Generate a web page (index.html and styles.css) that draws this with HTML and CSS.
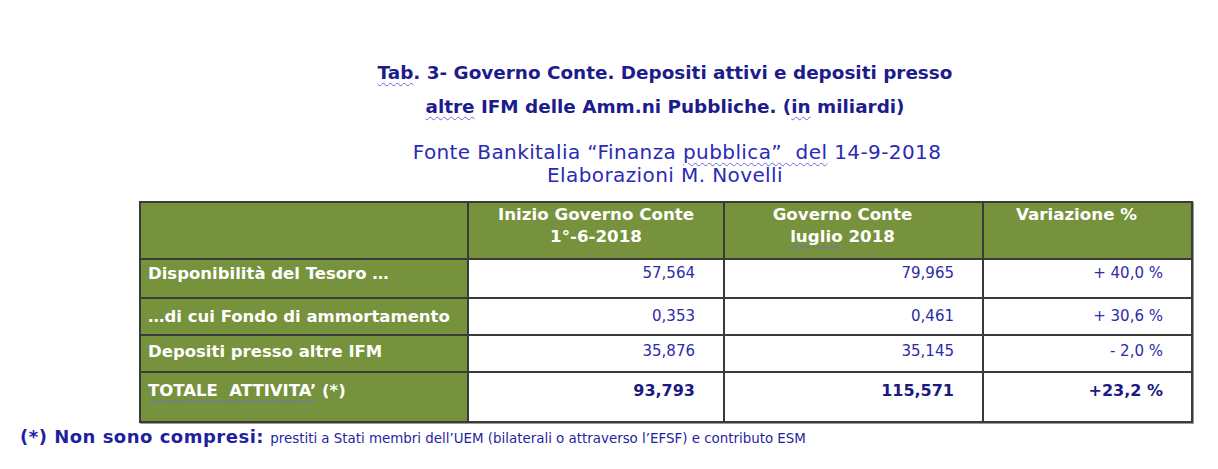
FILE: index.html
```html
<!DOCTYPE html>
<html lang="it">
<head>
<meta charset="utf-8">
<title>Tab. 3</title>
<link rel="stylesheet" href="styles.css">
</head>
<body>
<div class="page">
  <div class="block">
    <h1 class="title"><span class="sp">Tab</span>. 3- Governo Conte. Depositi attivi e depositi presso<br><span class="sp">altre</span> IFM delle Amm.ni Pubbliche. (<span class="sp">in</span> miliardi)</h1>
    <div class="source">
      <p class="src-line first">Fonte Bankitalia “Finanza <span class="sp">pubblica”  del</span> 14-9-2018</p>
      <p class="src-line">Elaborazioni M. Novelli</p>
    </div>
    <table class="tab">
      <colgroup>
        <col class="c1"><col class="c2"><col class="c3"><col class="c4">
      </colgroup>
      <tr class="head">
        <th></th>
        <th>Inizio Governo Conte<br>1°-6-2018</th>
        <th class="shift">Governo Conte<br><span class="sp">luglio</span> 2018</th>
        <th class="shift">Variazione %</th>
      </tr>
      <tr class="r1">
        <th>Disponibilità del Tesoro …</th>
        <td>57,564</td><td>79,965</td><td>+ 40,0 %</td>
      </tr>
      <tr class="r2">
        <th>…di cui Fondo di ammortamento</th>
        <td>0,353</td><td>0,461</td><td>+ 30,6 %</td>
      </tr>
      <tr class="r3">
        <th>Depositi presso altre IFM</th>
        <td>35,876</td><td>35,145</td><td>- 2,0 %</td>
      </tr>
      <tr class="r4 total">
        <th><span class="sp">TOTALE  ATTIVITA’</span> (*)</th>
        <td>93,793</td><td>115,571</td><td>+23,2 %</td>
      </tr>
    </table>
  </div>
  <p class="note"><b>(*) Non sono compresi:</b> <span class="small">prestiti a Stati membri dell’UEM (bilaterali o attraverso l’EFSF) e contributo ESM</span></p>
</div>
</body>
</html>
```
FILE: styles.css
```css
html, body {
  margin: 0;
  padding: 0;
  background: #ffffff;
}
body {
  font-family: "DejaVu Sans", "Liberation Sans", sans-serif;
  width: 1218px;
  height: 469px;
  overflow: hidden;
}
.page {
  padding-top: 56px;
}
.block {
  width: 1052px;
  margin-left: 139px;
  text-align: center;
}
.title {
  margin: 0;
  font-size: 18.4px;
  line-height: 34px;
  font-weight: bold;
  color: #1c1c8c;
}
.sp {
  text-decoration: underline wavy #6a6adc;
  text-decoration-thickness: 1px;
  text-underline-offset: 3px;
  white-space: pre;
}
.source {
  margin-top: 17px;
  font-size: 20px;
  line-height: 23px;
  letter-spacing: 0.4px;
  color: #2a2ab4;
}
.src-line {
  margin: 0;
}
.src-line.first {
  padding-left: 24px;
}
.tab {
  margin-top: 14px;
  width: 1052px;
  border-collapse: collapse;
  table-layout: fixed;
  box-shadow: 1px 1px 0 #9a9a9a;
}
.c1 { width: 328px; }
.c2 { width: 256px; }
.c3 { width: 259px; }
.c4 { width: 209px; }
.tab th, .tab td {
  border: 2px solid #3a3a3a;
  padding: 0;
  vertical-align: top;
}
.tab th {
  background: #76923c;
  color: #ffffff;
  font-size: 16.5px;
  font-weight: bold;
  text-align: left;
  padding-left: 7px;
}
.head th {
  height: 55px;
  text-align: center;
  padding: 0;
  line-height: 22px;
  font-size: 16.7px;
}
.head th.shift {
  padding-right: 22px;
}
.tab td {
  text-align: right;
  padding-right: 28px;
  font-size: 15px;
  color: #2b2ba8;
}
.r1 th, .r1 td { height: 33px; padding-top: 4px; }
.r2 th, .r2 td { height: 27px; padding-top: 8px; }
.r3 th, .r3 td { height: 29px; padding-top: 6px; }
.r4 th, .r4 td { height: 40px; padding-top: 8px; }
.total td {
  font-weight: bold;
  font-size: 16px;
  color: #1a1a80;
}
.note {
  margin: 4px 0 0 20px;
  color: #1f1fa0;
  font-size: 18px;
  line-height: 20px;
  letter-spacing: 0.5px;
  text-align: left;
}
.note b {
  font-weight: bold;
}
.small {
  font-size: 13.4px;
  letter-spacing: 0;
}
```
